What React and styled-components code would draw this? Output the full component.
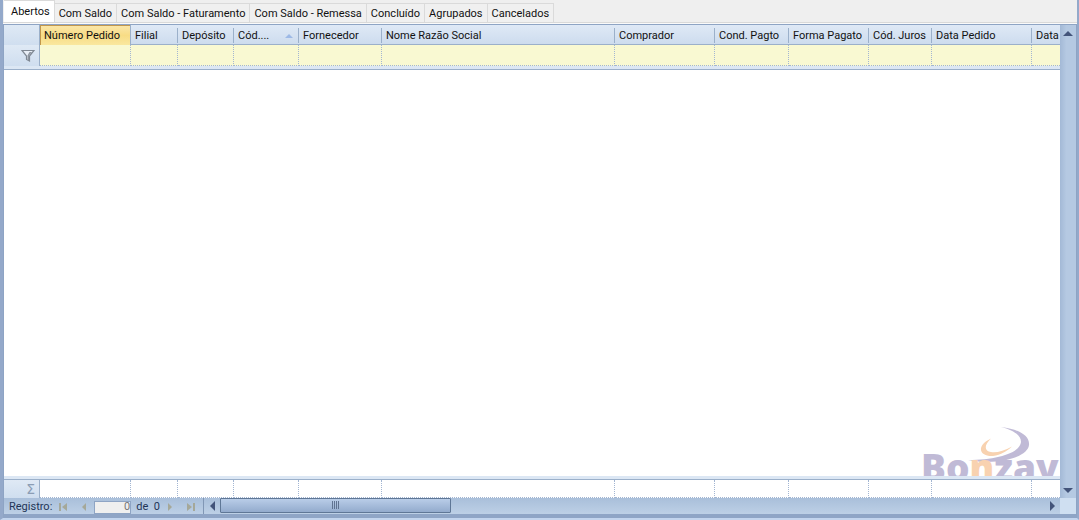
import React, { useState } from "react";
import styled, { createGlobalStyle, css } from "styled-components";

const TABS = [
  "Abertos",
  "Com Saldo",
  "Com Saldo - Faturamento",
  "Com Saldo - Remessa",
  "Concluído",
  "Agrupados",
  "Cancelados",
];

const COLUMNS = [
  { label: "Número Pedido", width: "91px" },
  { label: "Filial", width: "47px" },
  { label: "Depósito", width: "56px" },
  { label: "Cód....", width: "65px", sorted: true },
  { label: "Fornecedor", width: "83px" },
  { label: "Nome Razão Social", width: "233px" },
  { label: "Comprador", width: "100px" },
  { label: "Cond. Pagto", width: "74px" },
  { label: "Forma Pagato", width: "80px" },
  { label: "Cód. Juros", width: "63px" },
  { label: "Data Pedido", width: "100px" },
  { label: "Data", width: "minmax(0, 1fr)" },
];

const TEMPLATE = ["36px", ...COLUMNS.map((c) => c.width)].join(" ");

const FilterIcon = () => (
  <svg width="14" height="12" viewBox="0 0 14 12">
    <path d="M1 0.5h12L8.5 6v5L5.5 9.5V6z" fill="#e8eef6" stroke="#7f8893" strokeWidth="1.2" />
    <path d="M8.5 2h2.5L8 5.5v5L6.5 9.5V5.5z" fill="#8d959f" />
  </svg>
);

const Arrow = ({ dir, fill = "#43547a", size = 10 }) => {
  const d = {
    up: "M0 5L5 0l5 5z",
    down: "M0 0h10L5 5z",
    left: "M5 0v10L0 5z",
    right: "M0 0v10l5-5z",
  }[dir];
  const flat = dir === "up" || dir === "down";
  return (
    <svg
      width={flat ? size : size / 2}
      height={flat ? size / 2 : size}
      viewBox={flat ? "0 0 10 5" : "0 0 5 10"}
    >
      <path d={d} fill={fill} />
    </svg>
  );
};

const EndArrow = ({ flip }) => (
  <svg width="10" height="8" viewBox="0 0 10 8">
    <g fill="#a5a899" transform={flip ? "matrix(-1 0 0 1 10 0)" : undefined}>
      <path d="M1 0h2v8H1z" />
      <path d="M9 0v8L4 4z" />
    </g>
  </svg>
);

const Logo = () => (
  <Watermark width="138" height="50" viewBox="0 0 138 50">
    <path
      d="M79 1C97 3 108 10 107 19C106 31 76 40 46 34C75 34 98 27 99 16C99 9 91 4 79 1z"
      fill="#c0bad6"
    />
    <path d="M69 12.500C53 20 58 31 71 30C79 29 85 25 90 20.500C82 25 74 27 69 26C62 25 62 19 69 12.500z" fill="#f8d2b0" />
    <text x="-1" y="55" fill="#c0bad6">
      Bo<tspan fill="#f8d2b0">n</tspan>zay
    </text>
  </Watermark>
);

export default function App() {
  const [tab, setTab] = useState(TABS[0]);

  return (
    <>
      <GlobalStyle />
      <Window>
        <TabBar role="tablist">
          {TABS.map((name) => (
            <Tab key={name} role="tab" aria-selected={name === tab} $active={name === tab} onClick={() => setTab(name)}>
              {name}
            </Tab>
          ))}
        </TabBar>

        <GridFrame>
          <Main>
            <Table>
              <thead>
                <Row $kind="head">
                  <RowHeader as="th" aria-label="Linha" />
                  {COLUMNS.map((c, i) => (
                    <HeadCell key={c.label} $active={i === 0}>
                      <HeadButton>
                        {c.label}
                        {c.sorted && <Arrow dir="up" fill="#9db9e6" size={8} />}
                      </HeadButton>
                    </HeadCell>
                  ))}
                </Row>
                <Row $kind="filter">
                  <RowHeader>
                    <FilterIcon />
                  </RowHeader>
                  {COLUMNS.map((c) => (
                    <Cell key={c.label}>
                      <FilterInput aria-label={`Filtrar ${c.label}`} />
                    </Cell>
                  ))}
                </Row>
              </thead>
              <Body>
                <tr>
                  <td>
                    <Logo />
                  </td>
                </tr>
              </Body>
              <tfoot>
                <Row $kind="sum">
                  <RowHeader>
                    <Sigma>Σ</Sigma>
                  </RowHeader>
                  {COLUMNS.map((c) => (
                    <Cell key={c.label} />
                  ))}
                </Row>
              </tfoot>
            </Table>
            <VerticalBar>
              <BarButton aria-label="Rolar para cima">
                <Arrow dir="up" />
              </BarButton>
              <BarButton aria-label="Rolar para baixo">
                <Arrow dir="down" />
              </BarButton>
            </VerticalBar>
          </Main>

          <Footer>
            <Navigator>
              <label htmlFor="registro">Registro:</label>
              <NavButton aria-label="Primeiro">
                <EndArrow />
              </NavButton>
              <NavButton aria-label="Anterior">
                <Arrow dir="left" fill="#a5a899" size={8} />
              </NavButton>
              <RecordInput id="registro" defaultValue="0" />
              <span>de&nbsp; 0</span>
              <NavButton aria-label="Próximo">
                <Arrow dir="right" fill="#a5a899" size={8} />
              </NavButton>
              <NavButton aria-label="Último">
                <EndArrow flip />
              </NavButton>
            </Navigator>
            <HorizontalBar>
              <BarButton aria-label="Rolar para a esquerda">
                <Arrow dir="left" />
              </BarButton>
              <Track>
                <Thumb aria-label="Barra de rolagem">
                  <svg width="9" height="9" viewBox="0 0 9 9">
                    <path d="M1.500 0v8M3.500 0v8M5.500 0v8M7.500 0v8" stroke="#5f7391" />
                  </svg>
                </Thumb>
              </Track>
              <BarButton aria-label="Rolar para a direita">
                <Arrow dir="right" />
              </BarButton>
            </HorizontalBar>
            <Corner />
          </Footer>
        </GridFrame>
      </Window>
    </>
  );
}

const GlobalStyle = createGlobalStyle`
  * {
    box-sizing: border-box;
  }

  body {
    margin: 0;
    font: 11px/14px Roboto, "Liberation Sans", sans-serif;
    color: #111;
  }

  button,
  input {
    margin: 0;
    padding: 0;
    border: 0;
    border-radius: 0;
    background: none;
    font: inherit;
    color: inherit;
  }

  svg {
    display: block;
    flex: none;
  }
`;

const Window = styled.div`
  display: flex;
  flex-direction: column;
  min-height: 100vh;
  background: #efefef;
  border-left: 3px solid #94a9ca;
  border-right: 2px solid #94a9ca;
  border-bottom: 2px solid #c3d5ee;
`;

const TabBar = styled.div`
  display: flex;
  align-items: flex-end;
  height: 24px;
  padding: 0 0 1px 1px;
  border-bottom: 1px solid #fafafa;
  box-shadow: inset 0 -1px #d9d9d9;
`;

const Tab = styled.button`
  height: 19px;
  padding: 2px 4px 0;
  border: 1px solid #dadada;
  border-width: 1px 1px 0 0;
  background: #f0f0f0;
  white-space: nowrap;

  ${(p) =>
    p.$active &&
    css`
      height: 22px;
      padding: 0 4px 0 7px;
      background: #fff;
    `}
`;

const GridFrame = styled.div`
  display: flex;
  flex: 1;
  flex-direction: column;
  border-top: 1px solid #8ea4c4;
  border-left: 1px solid #8ea4c4;
  border-right: 1px solid #8ea4c4;
  border-bottom: 4px solid #8fa5c6;
`;

const Main = styled.div`
  display: flex;
  flex: 1;
`;

const Table = styled.table`
  display: flex;
  flex: 1;
  flex-direction: column;
  min-width: 0;
  background: #fff;

  thead,
  tfoot {
    display: block;
    background: #dce7f4;
  }

  thead {
    padding-bottom: 3px;
    border-bottom: 1px solid #9bb0ca;
  }

  tfoot {
    padding-top: 3px;
  }
`;

const RowHeader = styled.td`
  display: flex;
  align-items: center;
  justify-content: flex-end;
  padding: 0 4px 0 0;
  background: linear-gradient(#dfe9f5, #cfdeef);
  border-right: 1px solid #9bb0ca;
`;

const Cell = styled.td`
  display: flex;
  padding: 0;
  border-right: 1px dotted #a3b6d2;
  border-bottom: 1px dotted #a3b6d2;
  background: #fff;
  min-width: 0;

  &:last-child {
    border-right: 0;
  }
`;

const Row = styled.tr`
  display: grid;
  grid-template-columns: ${TEMPLATE};

  ${(p) =>
    p.$kind === "head" &&
    css`
      height: 20px;
      background: linear-gradient(#dfe9f6, #cddcee);
      border-bottom: 1px solid #9bb0ca;
    `}

  ${(p) =>
    p.$kind === "filter" &&
    css`
      height: 21px;

      ${Cell} {
        background: #f9f9d2;
      }
    `}

  ${(p) =>
    p.$kind === "sum" &&
    css`
      height: 19px;
      border-top: 1px solid #9bb0ca;
    `}
`;

const HeadCell = styled.th`
  display: flex;
  min-width: 0;
  padding: 3px 0;
  font-weight: 400;

  ${(p) =>
    p.$active &&
    css`
      padding: 0;
      background: linear-gradient(#fbe7ab, #f8dc85 50%, #fae9a2);
      box-shadow: inset 0 0 0 1px #c2974c;
    `}
`;

const HeadButton = styled.button`
  display: flex;
  flex: 1;
  align-items: center;
  justify-content: space-between;
  min-width: 0;
  padding: 1px 5px 0 4px;
  overflow: hidden;
  white-space: nowrap;
  text-align: left;
  border-right: 1px solid #9bb0ca;

  ${HeadCell}:last-child & {
    padding-right: 0;
    border-right: 0;
  }
`;

const FilterInput = styled.input`
  flex: 1;
  width: 100%;
  min-width: 0;
  padding: 0 4px;
  outline: 0;
`;

const Body = styled.tbody`
  display: flex;
  flex: 1;
  position: relative;
  overflow: hidden;
`;

const Watermark = styled.svg`
  position: absolute;
  right: 0;
  bottom: 0;
  font: 800 37px "Open Sans", "Liberation Sans", sans-serif;
`;

const Sigma = styled.span`
  font: 14px/14px "DejaVu Sans", sans-serif;
  color: #8b9db5;
`;

const BarButton = styled.button`
  display: flex;
  align-items: center;
  justify-content: center;
  flex: none;
  width: 16px;
  height: 16px;
`;

const VerticalBar = styled.div`
  display: flex;
  flex-direction: column;
  justify-content: space-between;
  width: 16px;
  background: linear-gradient(90deg, #a3b9d6, #b5c9e2 40%, #b5c9e2);
`;

const Footer = styled.div`
  display: flex;
  height: 16px;
  background: linear-gradient(#a9bfda, #bdd0e6);
`;

const Navigator = styled.div`
  display: flex;
  align-items: center;
  width: 200px;
  padding: 2px 0 0 5px;
  color: #1f3557;
  border-right: 1px solid #8197b5;
`;

const NavButton = styled.button`
  display: flex;
  align-items: center;
  justify-content: center;
  width: 21px;
  height: 14px;
`;

const RecordInput = styled.input`
  width: 37px;
  height: 13px;
  margin: 0 5px 0 0;
  background: #efefef;
  border: 1px solid #8ea4c4;
  text-align: right;
  color: #777;
`;

const HorizontalBar = styled.div`
  display: flex;
  flex: 1;
`;

const Track = styled.div`
  display: flex;
  flex: 1;
`;

const Thumb = styled.button`
  display: flex;
  align-items: center;
  justify-content: center;
  width: 28%;
  height: 15px;
  background: linear-gradient(#b9cde8, #93abcd);
  border: 1px solid #5f7796;
  border-radius: 1px;
`;

const Corner = styled.div`
  width: 16px;
  background: #cfdff1;
`;
